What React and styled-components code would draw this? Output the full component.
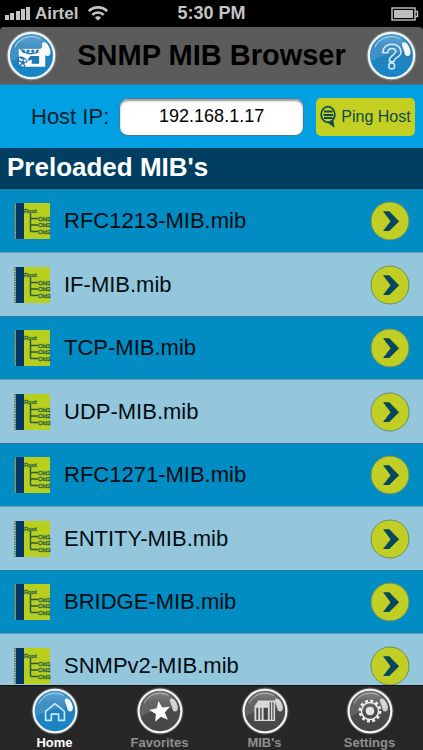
import React, { useId, useState } from "react";
import styled, { createGlobalStyle } from "styled-components";

const GlobalStyle = createGlobalStyle`
  * { box-sizing: border-box; }
  body { margin: 0; background: #000; font-family: "Liberation Sans", Arial, Helvetica, sans-serif; }
  button { font-family: inherit; }
`;

const Screen = styled.div`
  display: flex;
  flex-direction: column;
  height: 100vh;
  overflow: hidden;
`;

const StatusBar = styled.div`
  display: grid;
  grid-template-columns: 1fr auto 1fr;
  align-items: center;
  flex: none;
  height: 27px;
  padding: 0 4px;
  background: #000;
  color: #c4c4c4;
  font-size: 18px;
  font-weight: bold;
`;

const Carrier = styled.div`
  display: flex;
  align-items: center;
  gap: 4px;
  font-size: 17px;
  & > svg:last-child { margin-left: 5px; }
`;

const BatterySlot = styled.div`
  display: flex;
  justify-content: flex-end;
`;

const Header = styled.header`
  display: flex;
  align-items: center;
  justify-content: space-between;
  flex: none;
  height: 58px;
  padding: 0 6px;
  background: #5b5b5b;
  border-bottom: 1px solid #39728d;
  border-radius: 4px 4px 0 0;
`;

const Title = styled.h1`
  margin: 0;
  color: #000;
  font-size: 29px;
  font-weight: bold;
  line-height: 33px;
  white-space: nowrap;
`;

const IconButton = styled.button`
  display: flex;
  padding: 0;
  border: 0;
  background: none;
  cursor: pointer;
`;

const HostForm = styled.form`
  display: flex;
  align-items: center;
  flex: none;
  height: 63px;
  padding: 0 8px 0 31px;
  background: #01a0e2;
`;

const HostLabel = styled.label`
  margin-right: 10px;
  color: #06202c;
  font-size: 22px;
  white-space: nowrap;
`;

const HostInput = styled.input`
  flex: 1;
  min-width: 0;
  height: 38px;
  margin-right: 12px;
  padding: 0;
  border: 1px solid #3f7f9c;
  border-radius: 9px;
  background: #fff;
  box-shadow: inset 0 2px 2px #9a9a9a;
  color: #000;
  font-family: inherit;
  font-size: 18px;
  text-align: center;
`;

const PingButton = styled.button`
  display: flex;
  align-items: center;
  justify-content: center;
  gap: 5px;
  flex: none;
  width: 99px;
  height: 38px;
  padding: 0;
  border: 0;
  border-radius: 5px;
  background: #c3d021;
  color: #0d4a4c;
  font-size: 16px;
  white-space: nowrap;
  cursor: pointer;

  & > svg { flex: none; }
`;

const SectionTitle = styled.h2`
  flex: none;
  height: 41px;
  margin: 0;
  padding: 0 7px;
  background: #003f61;
  color: #fff;
  font-size: 26px;
  font-weight: bold;
  line-height: 38px;
`;

const MibList = styled.ul`
  flex: 1;
  min-height: 0;
  margin: 0;
  padding: 0;
  overflow-y: auto;
  scrollbar-width: none;
  list-style: none;
`;

const MibRow = styled.li`
  display: flex;
  align-items: center;
  height: 63px;
  padding: 0 13px;
  border-top: 1px solid #2c7899;
  background: #018dc4;

  &:nth-child(even) {
    height: 64px;
    background: #94c7dc;
    border-top-color: #5f9cb6;
  }
`;

const MibName = styled.span`
  flex: 1;
  margin-left: 13px;
  color: #020c12;
  font-size: 22px;
`;

const TabBar = styled.nav`
  display: grid;
  grid-template-columns: repeat(4, 1fr);
  flex: none;
  height: 65px;
  padding: 0 1px 0 2px;
  border-top: 1px solid #111;
  background: #272727;
`;

const Tab = styled.button`
  display: flex;
  flex-direction: column;
  align-items: center;
  padding: 1px 0 0;
  border: 0;
  background: none;
  color: ${(p) => (p.$active ? "#fff" : "#8f8f8f")};
  font-size: 13px;
  font-weight: bold;
  line-height: 16px;
  cursor: pointer;
`;

function SignalIcon() {
  return (
    <svg width="27" height="15" viewBox="0 0 27 15" fill="#c4c4c4" aria-hidden="true">
      <rect x="1" y="9" width="4" height="5" />
      <rect x="6" y="7" width="4" height="7" />
      <rect x="12" y="5" width="4" height="9" />
      <rect x="17" y="3" width="4" height="11" />
      <rect x="22" y="1" width="4" height="13" />
    </svg>
  );
}

function WifiIcon() {
  return (
    <svg width="22" height="17" viewBox="0 0 22 17" fill="none" stroke="#c4c4c4" strokeWidth="2.6" aria-hidden="true">
      <path d="M1.8 6.2a13 13 0 0 1 18.4 0" />
      <path d="M5.3 9.900a8 8 0 0 1 11.4 0" />
      <path d="M11 15.800 7.900 12.600a4.400 4.400 0 0 1 6.200 0z" fill="#c4c4c4" stroke="none" />
    </svg>
  );
}

function BatteryIcon() {
  return (
    <svg width="28" height="14" viewBox="0 0 28 14" aria-hidden="true">
      <rect x="1" y="1" width="23" height="12" fill="none" stroke="#c4c4c4" strokeWidth="1.4" />
      <rect x="3" y="3" width="19" height="8" fill="#bdbdbd" />
      <path d="M24 4.500h2.500v5H24" fill="none" stroke="#c4c4c4" strokeWidth="1.4" />
    </svg>
  );
}

function Orb({ size, blue, children }) {
  const id = useId();
  return (
    <svg width={size} height={size} viewBox="0 0 50 50" aria-hidden="true">
      <defs>
        <linearGradient id={`${id}face`} x1="0" y1="0" x2="0" y2="1">
          <stop offset="0" stopColor={blue ? "#4a9fd2" : "#777"} />
          <stop offset=".3" stopColor={blue ? "#277fb9" : "#4d4d4d"} />
          <stop offset="1" stopColor={blue ? "#1686c7" : "#464646"} />
        </linearGradient>
        <radialGradient id={`${id}glow`}>
          <stop offset=".88" stopColor="#fff" stopOpacity=".6" />
          <stop offset="1" stopColor="#fff" stopOpacity="0" />
        </radialGradient>
      </defs>
      <circle cx="25" cy="25" r="25" fill={`url(#${id}glow)`} />
      <circle cx="25" cy="25" r="22.2" fill={`url(#${id}face)`} stroke="#f1f5f8" strokeWidth="2.2" />
      <path d="M5 31A20 20 0 0 1 36 9.500Q42 14 43.500 22 22 20 5 31z" fill="#fff" opacity=".13" />
      <path d="M8.500 17A18.500 18.500 0 0 1 34 8.600" fill="none" stroke="#fff" opacity=".5" />
      {children}
      <path
        d="M36.200 12.300c3-1.300 6.400 3 7.400 8.500.6 3.600-1.800 5.700-4.600 4.200-1.200-.7-1-2.500-1.600-4.600-.8-2.800-3.600-7-1.200-8.100z"
        fill="#fff"
        opacity={blue ? ".95" : ".72"}
      />
    </svg>
  );
}

const MailGlyph = () => (
  <g>
    <path d="M12.500 18.500h26V36h-26z" fill="#fff" />
    <path d="M14 18c3.500 4.500 8 5.500 11.500 5.200S33 21 36 18" fill="none" stroke="#2079b4" strokeWidth="1.300" />
    <path d="M17 20.800h14" stroke="#2079b4" strokeWidth="3.200" strokeLinecap="round" strokeDasharray=".1 4.500" />
    <path d="M24 25.500h8.500V33H25l.5-3.500-5 .5z" fill="#2079b4" />
    <path d="m32 22 6-7" stroke="#fff" strokeWidth="1.800" />
    <path d="M11.500 26.500c3-1.500 8.500.5 9.500 4.500l-3 6h-6.500z" fill="#2079b4" />
    <circle cx="16.500" cy="32" r="2.900" fill="none" stroke="#fff" strokeWidth="2" strokeDasharray="2.300 1.300" />
    <path d="M13.500 27.500v2" stroke="#fff" strokeWidth="1.500" />
  </g>
);

const HelpGlyph = () => (
  <g fill="none" stroke="#d5edfa" strokeWidth="1.500" strokeLinejoin="round">
    <path d="M16.500 22c0-5 3.800-8 8.900-8s8.900 2.800 8.900 7.300c0 5.700-6.800 5.700-6.800 9.400V31h-4.600v-1.300c0-5 6.300-5.500 6.300-8.600 0-2-1.500-3-3.800-3s-3.900 1.400-4.200 4.300z" />
    <circle cx="25.200" cy="35.300" r="2.900" />
  </g>
);

const HomeGlyph = () => (
  <path
    d="m15.200 25.500 9.800-8.300 9.800 8.300v9.300h-6v-6.600h-7.600v6.600h-6z"
    fill="none"
    stroke="#c9e8f8"
    strokeWidth="1.700"
    strokeLinejoin="round"
  />
);

const StarGlyph = () => (
  <path
    d="m25 14.500 2.900 7.200 8 .5-6.200 5.100 2 8L25 31l-6.700 4.300 2-8-6.200-5.100 8-.5z"
    fill="#fff"
    transform="rotate(-9 25 25)"
  />
);

const LibraryGlyph = () => (
  <g>
    <path d="m14 20 4-6h17.500v21.500H14z" fill="#d9d9d9" />
    <path d="M16 21.500h2V34h-2zM20 21.500h1.500V34H20zM23.500 21.500H28V34h-4.500z" fill="#444" />
    <path d="M30.500 15.500v18.500M33.300 15.500v18.500" stroke="#444" strokeWidth="1.200" />
  </g>
);

const GearGlyph = () => (
  <g fill="none" stroke="#f0f0f0">
    <circle cx="25" cy="25" r="10.600" strokeWidth="2.600" strokeDasharray="3.100 2.450" />
    <circle cx="25" cy="25" r="8.900" strokeWidth="1.500" />
    <circle cx="25" cy="25" r="4" fill="#dce4ec" strokeWidth="1" />
  </g>
);

function NotebookIcon() {
  return (
    <svg width="38" height="38" viewBox="0 0 38 38" aria-hidden="true">
      <rect x="2" y="1" width="35" height="36" fill="#b8cf1e" />
      <rect x="3" y="1" width="8" height="36" fill="#063763" />
      <path d="M2 1v36" stroke="#547d91" strokeWidth="2" strokeDasharray="1.500 1" />
      <path d="M17.500 11v18.500M17.500 16.500H25M17.500 23H25M17.500 29.500H25" fill="none" stroke="#255b46" strokeWidth="1.500" />
      <g fill="#255b46" stroke="#255b46" strokeWidth=".3" fontFamily="Liberation Sans, sans-serif" fontSize="6">
        <text x="11" y="11">Root</text>
        <text x="25" y="19">Old1</text>
        <text x="25" y="25">Old2</text>
        <text x="25" y="32">Old3</text>
      </g>
    </svg>
  );
}

function ArrowIcon() {
  return (
    <svg width="40" height="40" viewBox="0 0 40 40" aria-hidden="true">
      <circle cx="20" cy="20" r="19" fill="#c1cf24" stroke="#648e62" />
      <path d="M13 10.300h6.300l9.800 9.900-9.800 9.800H13l7.600-9.800z" fill="#04475f" />
    </svg>
  );
}

function PingIcon() {
  return (
    <svg width="16" height="23" viewBox="0 0 16 23" aria-hidden="true">
      <path d="M12.500 15.500 13.500 21 8 16.800" fill="#0d4a4c" stroke="#0d4a4c" strokeWidth="1.500" />
      <ellipse cx="8" cy="9.500" rx="6.800" ry="7.800" fill="#c3d021" stroke="#0d4a4c" strokeWidth="1.800" />
      <path d="M4 6.500h8.500M3.500 10h9.500M4 13h8.500" stroke="#0d4a4c" strokeWidth="1.800" />
    </svg>
  );
}

const MIBS = ["RFC1213", "IF", "TCP", "UDP", "RFC1271", "ENTITY", "BRIDGE", "SNMPv2"];

const TABS = [
  { label: "Home", Glyph: HomeGlyph },
  { label: "Favorites", Glyph: StarGlyph },
  { label: "MIB's", Glyph: LibraryGlyph },
  { label: "Settings", Glyph: GearGlyph },
];

export default function App() {
  const [host, setHost] = useState("192.168.1.17");
  const [tab, setTab] = useState("Home");

  return (
    <Screen>
      <GlobalStyle />
      <StatusBar>
        <Carrier>
          <SignalIcon />
          Airtel
          <WifiIcon />
        </Carrier>
        <span>5:30 PM</span>
        <BatterySlot>
          <BatteryIcon />
        </BatterySlot>
      </StatusBar>
      <Header>
        <IconButton type="button" aria-label="Mail">
          <Orb size={51} blue><MailGlyph /></Orb>
        </IconButton>
        <Title>SNMP MIB Browser</Title>
        <IconButton type="button" aria-label="Help">
          <Orb size={51} blue><HelpGlyph /></Orb>
        </IconButton>
      </Header>
      <HostForm onSubmit={(e) => e.preventDefault()}>
        <HostLabel htmlFor="host">Host IP:</HostLabel>
        <HostInput id="host" value={host} onChange={(e) => setHost(e.target.value)} />
        <PingButton type="submit">
          <PingIcon />
          Ping Host
        </PingButton>
      </HostForm>
      <SectionTitle>Preloaded MIB's</SectionTitle>
      <MibList>
        {MIBS.map((name) => (
          <MibRow key={name}>
            <NotebookIcon />
            <MibName>{name}-MIB.mib</MibName>
            <IconButton type="button" aria-label={`Open ${name}-MIB.mib`}>
              <ArrowIcon />
            </IconButton>
          </MibRow>
        ))}
      </MibList>
      <TabBar>
        {TABS.map(({ label, Glyph }) => (
          <Tab key={label} type="button" $active={tab === label} onClick={() => setTab(label)}>
            <Orb size={48} blue={tab === label}><Glyph /></Orb>
            {label}
          </Tab>
        ))}
      </TabBar>
    </Screen>
  );
}
